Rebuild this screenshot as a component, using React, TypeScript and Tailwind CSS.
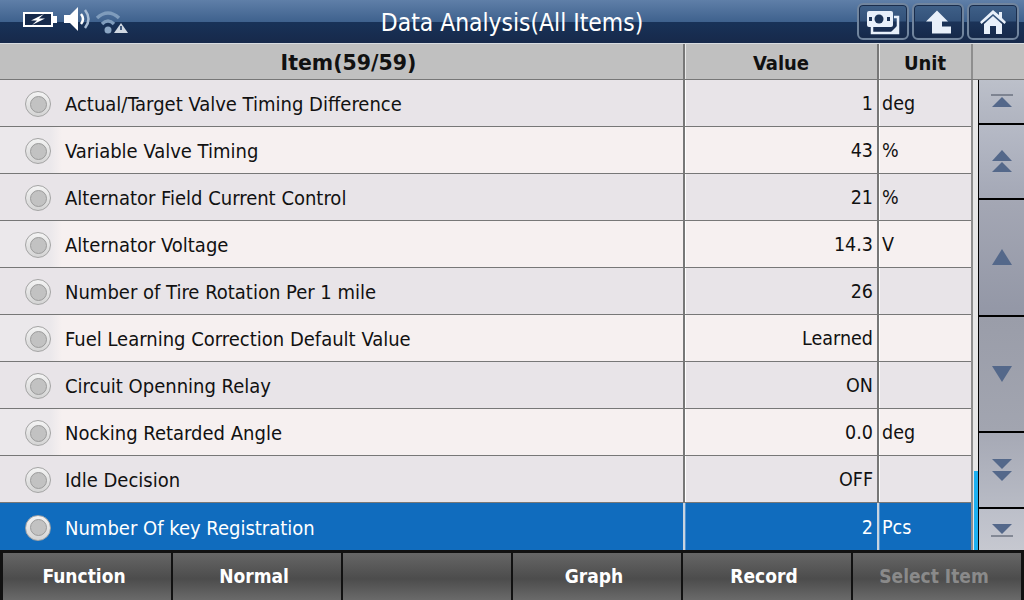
const rows = [
  { name: "Actual/Target Valve Timing Difference", value: "1", unit: "deg" },
  { name: "Variable Valve Timing", value: "43", unit: "%" },
  { name: "Alternator Field Current Control", value: "21", unit: "%" },
  { name: "Alternator Voltage", value: "14.3", unit: "V" },
  { name: "Number of Tire Rotation Per 1 mile", value: "26", unit: "" },
  { name: "Fuel Learning Correction Default Value", value: "Learned", unit: "" },
  { name: "Circuit Openning Relay", value: "ON", unit: "" },
  { name: "Nocking Retarded Angle", value: "0.0", unit: "deg" },
  { name: "Idle Decision", value: "OFF", unit: "" },
  { name: "Number Of key Registration", value: "2", unit: "Pcs" },
];

const scrollBtns = [
  { h: "h-[43px]", kind: "top", bg: "from-[#bcc0ca] to-[#b0b4c0]" },
  { h: "h-[74px]", kind: "dup", bg: "from-[#b6bac6] to-[#a4a8b6]" },
  { h: "h-[116px]", kind: "up", bg: "from-[#a4a7b4] to-[#9397a6]" },
  { h: "h-[115px]", kind: "down", bg: "from-[#9a9da9] to-[#a2a5b0]" },
  { h: "h-[75px]", kind: "ddown", bg: "from-[#a6a9b5] to-[#b8bbc5]" },
  { h: "h-[41px]", kind: "bottom", bg: "from-[#bcbfc9] to-[#c6c8d0]" },
];

const ScrollIcon = ({ kind }: { kind: string }) => (
  <svg width="24" height="30" viewBox="-12 0 24 30">
    {kind === "top" && (
      <>
        <path d="M-11 9H11" stroke="#444c5c" strokeWidth="1" />
        <path d="M-10 21L0 11L10 21Z" fill="#54688a" />
      </>
    )}
    {kind === "dup" && (
      <>
        <path d="M-10 15L0 4L10 15Z" fill="#54688a" />
        <path d="M-10 26L0 16L10 26Z" fill="#54688a" />
      </>
    )}
    {kind === "up" && <path d="M-10 23L0 7L10 23Z" fill="#54688a" />}
    {kind === "down" && <path d="M-10 7H10L0 23Z" fill="#54688a" />}
    {kind === "ddown" && (
      <>
        <path d="M-10 4H10L0 14Z" fill="#54688a" />
        <path d="M-10 16H10L0 26Z" fill="#54688a" />
      </>
    )}
    {kind === "bottom" && (
      <>
        <path d="M-10 9H10L0 19Z" fill="#54688a" />
        <path d="M-11 21H11" stroke="#444c5c" strokeWidth="1" />
      </>
    )}
  </svg>
);

const TopButton = ({ children }: { children: React.ReactNode }) => (
  <div className="w-[52px] h-[37px] rounded-[6px] border-2 border-[#71859e] shadow-[inset_0_0_0_1px_#1a2d4c] bg-[linear-gradient(#3f6088_0%,#33527a_48%,#1b3358_52%,#16294a_100%)] flex items-center justify-center">
    {children}
  </div>
);

const Radio = () => (
  <div className="w-[26px] h-[26px] rounded-full flex items-center justify-center border border-[#a4a4a4] bg-gradient-to-b from-[#f4f4f4] to-[#d4d4d4]">
    <div className="w-[17px] h-[17px] rounded-full bg-[#c2c2c2] border border-[#9c9c9c]" />
  </div>
);

const footer = ["Function", "Normal", "", "Graph", "Record", "Select Item"];

export default function App() {
  return (
    <div className="w-[1024px] h-[600px] overflow-hidden flex flex-col bg-[#c0c0c0] text-[#111] font-['DejaVu_Sans_Condensed','DejaVu_Sans',sans-serif]">
      <div className="h-[44px] shrink-0 grid grid-cols-[1fr_auto_1fr] items-center border-b border-[#d8dce0] bg-[linear-gradient(#5f7fa8_0%,#3f628e_50%,#183258_52%,#17294a_100%)]">
        <div className="flex items-center pl-[23px]">
          <svg width="105" height="30" viewBox="0 0 105 30">
            <rect x="1" y="6" width="28" height="13" fill="#15294a" stroke="#fff" strokeWidth="2" />
            <rect x="30" y="9" width="4" height="7" fill="#fff" />
            <path d="M21 7L8 13.5H14L9 18L22 11.5H16Z" fill="#fff" />
            <path d="M41 8H47L55 0V24L47 16H41Z" fill="#fff" />
            <path d="M58 7Q62 12 58 17" fill="none" stroke="#fff" strokeWidth="2.5" />
            <path d="M62 3Q69 12 62 21" fill="none" stroke="#a9bdd4" strokeWidth="2.5" />
            <g fill="none" stroke="#7f9cbc" strokeWidth="3.5">
              <path d="M74 11Q85 1 96 11" />
              <path d="M79 17Q85 11 91 17" />
            </g>
            <circle cx="85" cy="23" r="3.5" fill="#8ba6c4" />
            <path d="M98 16L105 26H91Z" fill="#d0d8e2" />
            <rect x="97.2" y="19" width="1.6" height="4" fill="#24406a" />
          </svg>
        </div>
        <div className="text-[24.4px] leading-none text-white pt-[3px]">Data Analysis(All Items)</div>
        <div className="flex justify-end gap-[3px] pr-[5px]">
          <TopButton>
            <svg width="34" height="26" viewBox="0 0 34 26">
              <path d="M6 18V24H32V8H28" fill="none" stroke="#e8f0fa" strokeWidth="2.5" />
              <rect x="1" y="2" width="26" height="16" rx="2" fill="#e8f0fa" />
              <circle cx="13" cy="10" r="4.5" fill="#1d3558" />
              <rect x="3" y="8" width="3" height="4" fill="#1d3558" />
              <rect x="21" y="8" width="3" height="4" fill="#1d3558" />
              <path d="M24 24L32 16V24Z" fill="#e8f0fa" />
            </svg>
          </TopButton>
          <TopButton>
            <svg width="30" height="26" viewBox="0 0 30 26">
              <path d="M14 1.5L25 12.5H19V17.5H28V24.5H9V12.5H3Z" fill="#e8f0fa" />
            </svg>
          </TopButton>
          <TopButton>
            <svg width="28" height="26" viewBox="0 0 28 26">
              <path d="M14 1L20 6V3H23V9L27 13L25.5 15L14 5L2.5 15L1 13Z" fill="#e8f0fa" />
              <path d="M5 15L14 7L23 15V25H17V17H11V25H5Z" fill="#e8f0fa" />
            </svg>
          </TopButton>
        </div>
      </div>

      <div className="h-[36px] shrink-0 flex text-[20px] font-bold bg-[#c0c0c0] border-b border-[#777]">
        <div className="w-[683px] flex items-center justify-center pl-[14px] pt-[4px] font-['DejaVu_Sans',sans-serif] text-[20.5px]">Item(59/59)</div>
        <div className="w-[194px] flex items-center justify-center pt-[2px] border-l-2 border-[#777] shadow-[inset_1px_0_0_#e8e8e8]">Value</div>
        <div className="w-[94px] flex items-center justify-center pt-[2px] border-l-2 border-[#777] shadow-[inset_1px_0_0_#e8e8e8]">Unit</div>
        <div className="flex-1 border-l-2 border-[#8e8e8e]" />
      </div>

      <div className="flex h-[470px] shrink-0">
        <div className="w-[971px] flex flex-col">
          {rows.map((r, i) => {
            const sel = i === rows.length - 1;
            const bg = sel ? "bg-[#106cbe] text-white" : i % 2 === 0 ? "bg-[#e8e4e8]" : "bg-[#f6f0f0]";
            const nameBg = !sel && i % 2 === 1 ? "bg-[linear-gradient(90deg,#ebe8eb_0,#ebe8eb_50px,#f6f0f0_62px)]" : "";
            const line = sel ? "border-[#c8d4e0] shadow-[inset_1px_0_0_#4e92d2]" : "border-[#777] shadow-[inset_1px_0_0_#fff]";
            return (
              <div key={r.name} className={`h-[47px] flex ${bg} ${sel ? "" : "border-b border-[#777]"}`}>
                <div className={`w-[683px] flex items-center pl-[25px] pt-[2px] gap-[14px] text-[20px] ${nameBg}`}>
                  <Radio />
                  <span>{r.name}</span>
                </div>
                <div className={`w-[194px] flex items-center justify-end pr-[4px] pt-[2px] border-l-2 text-[19.5px] ${line}`}>{r.value}</div>
                <div className={`flex-1 flex items-center pl-[3px] pt-[2px] border-l-2 text-[19.5px] ${line}`}>{r.unit}</div>
              </div>
            );
          })}
        </div>
        <div className="w-[7px] border-l-2 border-[#8e8e8e] bg-[#e6e6e6] flex flex-col justify-end">
          <div className="h-[79px] ml-[1px] w-[4px] bg-[#1cb0f0]" />
        </div>
        <div className="flex-1 flex flex-col gap-[2px] bg-black pl-[1px]">
          {scrollBtns.map((b) => (
            <div key={b.kind} className={`${b.h} flex items-center justify-center bg-gradient-to-b ${b.bg}`}>
              <ScrollIcon kind={b.kind} />
            </div>
          ))}
        </div>
      </div>

      <div className="flex-1 flex gap-[2px] bg-[#111] pt-[3px] px-[3px]">
        {footer.map((f, i) => (
          <div
            key={i}
            className={`flex-1 flex items-center justify-center pr-[6px] text-[19px] font-bold bg-[linear-gradient(#666_0%,#4c4c4c_55%,#6a6a6a_100%)] ${f === "Select Item" ? "text-[#8a8a8a]" : "text-white"}`}
          >
            {f}
          </div>
        ))}
      </div>
    </div>
  );
}
